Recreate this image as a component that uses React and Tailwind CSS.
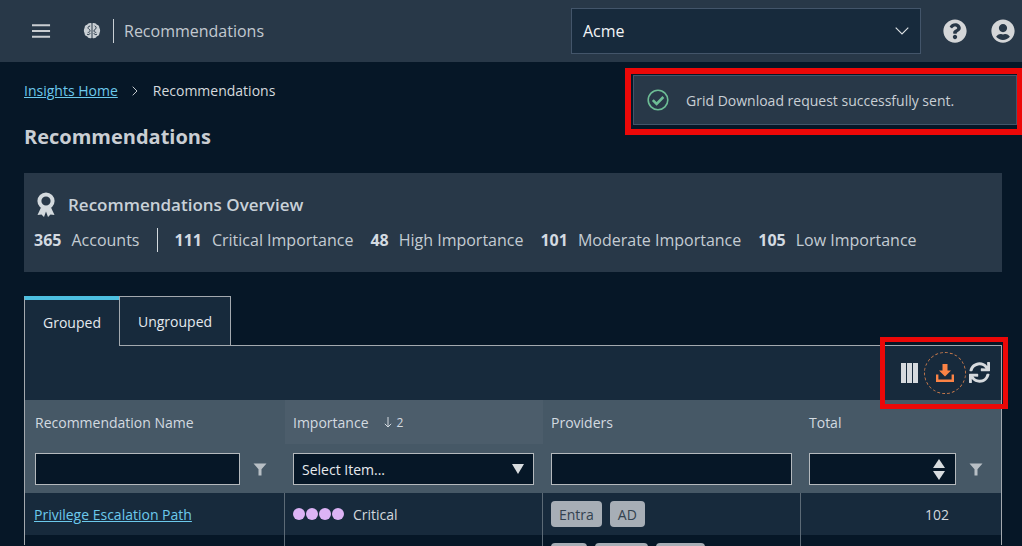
import React from "react";
import { FaSync, FaQuestionCircle, FaUserCircle } from "react-icons/fa";

const font = { fontFamily: '"Open Sans", sans-serif' };

function Funnel({ className = "" }) {
  return (
    <svg viewBox="0 0 14 14" className={`w-[14px] h-[14px] ${className}`}>
      <path d="M0.5 1.5H13.5L8.5 7.2V13.5L5.5 13.5V7.2Z" fill="#b8bfc5" />
    </svg>
  );
}

function Brain() {
  return (
    <svg viewBox="0 0 18 18" className="w-[18px] h-[18px]">
      <path d="M8.5 1.2C6.5 0.6 4.8 1.4 4.2 2.8 2.6 3 1.5 4.4 1.6 6 0.7 7.2 0.6 9.6 1.5 11c0 1.7 1 3 2.6 3.3 0.7 1.6 2.6 2.4 4.4 1.7z" fill="#c9cfd4" />
      <path d="M9.5 1.2C11.5 0.6 13.2 1.4 13.8 2.8 15.4 3 16.5 4.4 16.4 6 17.3 7.2 17.4 9.6 16.5 11c0 1.7-1 3-2.6 3.3-0.7 1.6-2.6 2.4-4.4 1.7z" fill="#c9cfd4" />
      <path d="M6.8 4C4.8 4 4.4 6.4 6 7.2 7.6 8 7.4 10.6 5.2 10.4M4.4 12.4C5.6 13 6.6 12.6 7 11.6M12 4C13.6 4.6 13.6 6.8 12 7.4 10.4 8 10.6 10.6 12.8 10.4M13.6 12.4C12.4 13 11.4 12.6 11 11.6" fill="none" stroke="#283848" strokeWidth="1" strokeLinecap="round" />
    </svg>
  );
}

function Stat({ n, label, className = "" }) {
  return (
    <span className={`flex items-center ${className}`}>
      <span className="font-bold text-[#d3dae1]">{n}</span>
      <span className="ml-[10px] text-[#c4ccd3]">{label}</span>
    </span>
  );
}

function Chip({ children }) {
  return (
    <span className="h-[26px] px-2 flex items-center rounded-[4px] bg-[#a7aeb6] text-[#33424f] text-[14px]">
      {children}
    </span>
  );
}

export default function App() {
  return (
    <div style={font} className="relative h-[546px] w-[1022px] overflow-hidden bg-[#061727] text-[#d3d7db]">
      {/* Top bar */}
      <header className="h-[62px] bg-[#283848] flex items-center pl-[32px]">
        <svg viewBox="0 0 20 16" className="w-[19px] h-[16px]">
          <path d="M0 2H19M0 8H19M0 14H19" stroke="#c9cdd1" strokeWidth="2" />
        </svg>
        <span className="ml-[32px]"><Brain /></span>
        <span className="ml-[12px] w-px h-[24px] bg-[#c9cfd4]" />
        <span className="ml-[10px] text-[16px] text-[#c2c9d0]">Recommendations</span>
        <div className="ml-auto w-[350px] h-[46px] mr-[22px] flex items-center justify-between pl-[11px] pr-[11px] bg-[#172a3c] border border-[#43556a] text-[16px] text-[#f3f5f7] -mt-[1px]">
          <span>Acme</span>
          <svg viewBox="0 0 14 8" className="w-[14px] h-[8px]">
            <path d="M0.7 0.7L7 7L13.3 0.7" fill="none" stroke="#dfe3e6" strokeWidth="1.1" />
          </svg>
        </div>
        <FaQuestionCircle className="w-[24px] h-[24px] mr-[24px] text-[#d4d6d8]" />
        <FaUserCircle className="w-[24px] h-[24px] mr-[7px] text-[#d4d6d8]" />
      </header>

      <main className="px-[24px]">
        <nav className="h-[57px] flex items-center text-[14px]">
          <a className="text-[#6cc9ec] underline">Insights Home</a>
          <svg viewBox="0 0 6 10" className="w-[6px] h-[10px] ml-[14px] mr-[15px]">
            <path d="M0.7 0.7L5 5L0.7 9.3" fill="none" stroke="#c2c7cc" strokeWidth="1" />
          </svg>
          <span className="text-[#d5dade]">Recommendations</span>
        </nav>
        <h1 className="h-[54px] text-[20px] leading-[36px] font-bold text-[#c9ced3]">Recommendations</h1>

        {/* Overview */}
        <section className="h-[99px] w-[978px] bg-[#283848] pl-[10px] pt-[19px]">
          <div className="flex items-center h-[26px]">
            <svg viewBox="0 0 20 26" className="w-[20px] h-[26px] ml-[2px]">
              <path d="M5 15.5L1.5 23L5.5 22.5L8 25L10 19.5L12 25L14.5 22.5L18.5 23L15 15.5Z" fill="#d4dade" />
              <circle cx="10" cy="9" r="6.6" fill="none" stroke="#d4dade" strokeWidth="4" />
            </svg>
            <span className="ml-[12px] text-[17px] font-semibold text-[#c9d1d8]">Recommendations Overview</span>
          </div>
          <div className="mt-[10px] flex items-center text-[16px] h-[24px]">
            <Stat n="365" label="Accounts" />
            <span className="ml-[18px] w-px h-[24px] bg-[#d4dade]" />
            <Stat n="111" label="Critical Importance" className="ml-[16px]" />
            <Stat n="48" label="High Importance" className="ml-[17px]" />
            <Stat n="101" label="Moderate Importance" className="ml-[17px]" />
            <Stat n="105" label="Low Importance" className="ml-[17px]" />
          </div>
        </section>

        {/* Tabs */}
        <div className="mt-[24px] flex h-[50px] w-[978px] text-[14px] text-[#e4e9ee] relative">
          <div className="w-[95px] h-[50px] bg-[#172a3c] border-t-[4px] border-[#4cbfe0] border-l border-l-[#a3a9af] flex items-center justify-center pb-[2px] z-10">Grouped</div>
          <div className="w-[112px] h-[50px] bg-[#172a3c] border border-[#a3a9af] flex items-center justify-center">Ungrouped</div>
          <div className="flex-1 border-b border-[#a3a9af]" />
        </div>

        {/* Grid */}
        <section className="w-[978px] border-x border-[#a3a9af] bg-[#172a3c] h-[200px] -mt-px">
          <div className="h-[55px] flex items-center justify-end pr-[11px]">
            <svg viewBox="0 0 17 20" className="w-[17px] h-[20px]">
              <path d="M0 0h5v20H0zM6 0h5v20H6zM12 0h5v20h-5z" fill="#d6dade" />
            </svg>
            <span className="ml-[6px] w-[42px] h-[42px] rounded-full border border-dashed border-[#c87a4c] flex items-center justify-center">
              <svg viewBox="0 0 18 18" className="w-[18px] h-[18px]">
                <path d="M6.5 0h5v6.5H15L9 12.5 3 6.5h3.5z" fill="#fb8345" />
                <path d="M0 10.5h2.4v5h13.2v-5H18V18H0z" fill="#fb8345" />
              </svg>
            </span>
            <FaSync className="ml-[3px] w-[21px] h-[21px] text-[#d6dade]" />
          </div>

          {/* Column headers */}
          <div className="h-[93px] bg-[#465866] grid grid-cols-[260px_258px_258px_1fr] text-[14px] text-[#d3dae0]">
            <div className="pl-[10px] flex flex-col">
              <div className="h-[45px] flex items-center">Recommendation Name</div>
              <div className="flex items-center h-[32px] mt-[8px]">
                <span className="w-[205px] h-[32px] bg-[#061727] border border-[#b4b9bd]" />
                <Funnel className="ml-[13px]" />
              </div>
            </div>
            <div className="pl-[8px] flex flex-col relative">
              <div className="absolute left-0 top-0 right-0 h-[44px] bg-[#4c5d6b]" />
              <div className="relative h-[45px] flex items-center">
                <span>Importance</span>
                <svg viewBox="0 0 8 11" className="w-[8px] h-[11px] ml-[15px]">
                  <path d="M4 0V10M0.8 6.8L4 10L7.2 6.8" fill="none" stroke="#d3dae0" strokeWidth="1" />
                </svg>
                <span className="ml-[5px] text-[12px]">2</span>
              </div>
              <div className="relative mt-[8px] w-[241px] h-[32px] bg-[#061727] border border-[#b4b9bd] flex items-center justify-between pl-[8px] pr-[9px] text-[#e6eaee]">
                <span>Select Item...</span>
                <svg viewBox="0 0 12 10" className="w-[12px] h-[10px]"><path d="M0 0H12L6 10Z" fill="#d8dcdf" /></svg>
              </div>
            </div>
            <div className="pl-[8px] flex flex-col">
              <div className="h-[45px] flex items-center">Providers</div>
              <span className="mt-[8px] w-[241px] h-[32px] bg-[#061727] border border-[#b4b9bd]" />
            </div>
            <div className="pl-[8px] flex flex-col">
              <div className="h-[45px] flex items-center">Total</div>
              <div className="mt-[8px] flex items-center">
                <div className="w-[147px] h-[32px] bg-[#061727] border border-[#b4b9bd] flex flex-col items-end justify-center gap-[3px] pr-[10px]">
                  <svg viewBox="0 0 12 9" className="w-[12px] h-[9px]"><path d="M6 0L12 9H0Z" fill="#d8dcdf" /></svg>
                  <svg viewBox="0 0 12 9" className="w-[12px] h-[9px]"><path d="M0 0H12L6 9Z" fill="#d8dcdf" /></svg>
                </div>
                <Funnel className="ml-[13px]" />
              </div>
            </div>
          </div>

          {/* Row 1 */}
          <div className="h-[42px] bg-[#172a3c] grid grid-cols-[260px_258px_258px_1fr] text-[14px]">
            <div className="pl-[9px] flex items-center">
              <a className="text-[#6cc9ec] underline">Privilege Escalation Path</a>
            </div>
            <div className="pl-[8px] -ml-px border-l border-[#5c6a76] flex items-center">
              <span className="flex gap-[1px]">
                <span className="w-[12px] h-[12px] rounded-full bg-[#dcb3f5]" />
                <span className="w-[12px] h-[12px] rounded-full bg-[#dcb3f5]" />
                <span className="w-[12px] h-[12px] rounded-full bg-[#dcb3f5]" />
                <span className="w-[12px] h-[12px] rounded-full bg-[#dcb3f5]" />
              </span>
              <span className="ml-[9px] text-[#d3d8dd]">Critical</span>
            </div>
            <div className="pl-[8px] -ml-px border-l border-[#5c6a76] flex items-center gap-[8px]">
              <Chip>Entra</Chip>
              <Chip>AD</Chip>
            </div>
            <div className="-ml-px border-l border-[#5c6a76] flex items-center justify-end pr-[52px] text-[#d3d8dd]">102</div>
          </div>

          {/* Row 2 (clipped) */}
          <div className="h-[42px] bg-[#061727] grid grid-cols-[260px_258px_258px_1fr] text-[14px]">
            <div />
            <div className="-ml-px border-l border-[#5c6a76]" />
            <div className="pl-[8px] pt-[8px] -ml-px border-l border-[#5c6a76] flex items-start gap-[8px]">
              <span className="w-[36px] h-[26px] rounded-[4px] bg-[#a7aeb6]" />
              <span className="w-[53px] h-[26px] rounded-[4px] bg-[#a7aeb6]" />
              <span className="w-[49px] h-[26px] rounded-[4px] bg-[#a7aeb6]" />
            </div>
            <div className="-ml-px border-l border-[#5c6a76]" />
          </div>
        </section>
      </main>

      {/* Toast */}
      <div className="absolute left-[633px] top-[75px] w-[384px] h-[50px] bg-[#283848] border border-[#43556a] flex items-center pl-[13px] text-[14px] font-medium text-[#c9cfd5]">
        <svg viewBox="0 0 22 22" className="w-[22px] h-[22px]">
          <circle cx="11" cy="11" r="9.8" fill="none" stroke="#6dbd95" strokeWidth="1.6" />
          <path d="M5.8 11.2L9.6 15L16.4 8" fill="none" stroke="#6dbd95" strokeWidth="2.6" />
        </svg>
        <span className="ml-[17px]">Grid Download request successfully sent.</span>
      </div>

      {/* Annotation boxes */}
      <div className="absolute left-[625px] top-[68px] w-[397px] h-[67px] border-[6px] border-r-[5px] border-[#ec0808] pointer-events-none" />
      <div className="absolute left-[880px] top-[337px] w-[128px] h-[72px] border-[5px] border-[#ec0808] pointer-events-none" />
    </div>
  );
}
